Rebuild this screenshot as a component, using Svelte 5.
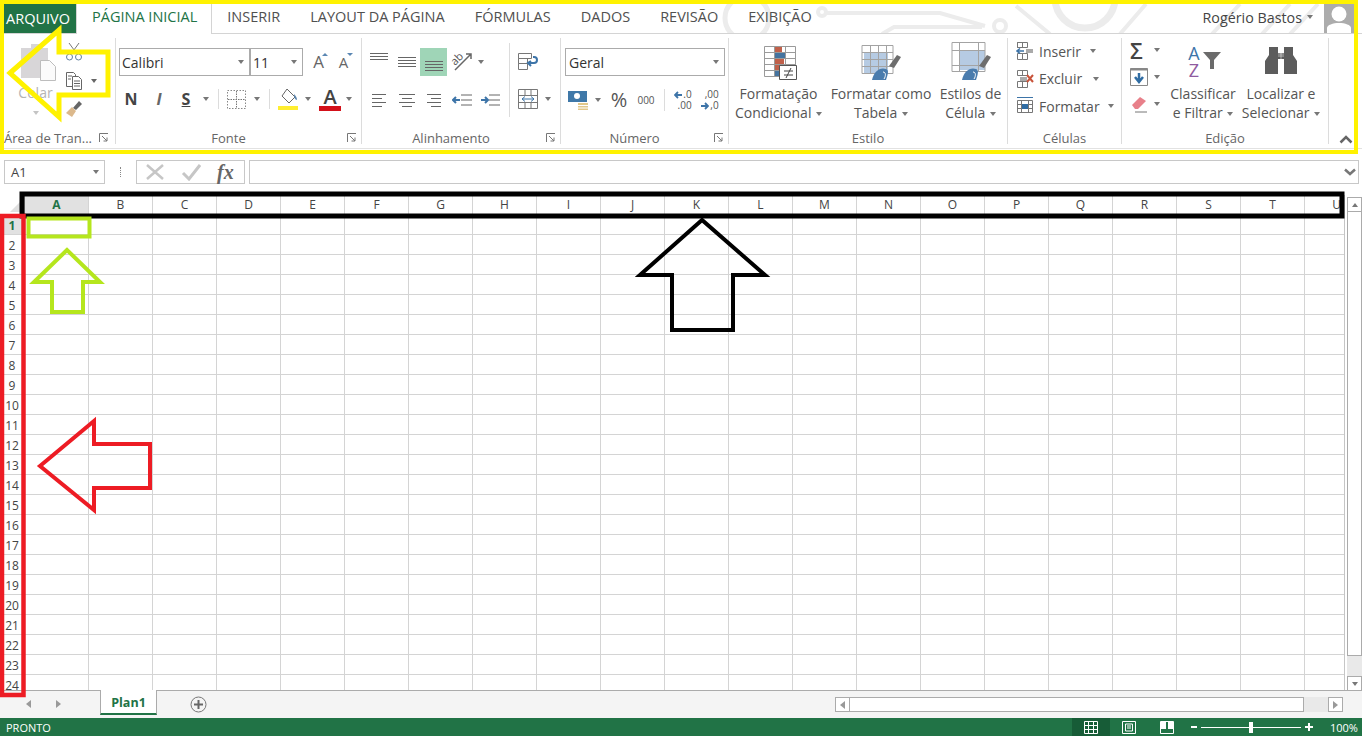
<script>
  const tabs = ['INSERIR', 'LAYOUT DA PÁGINA', 'FÓRMULAS', 'DADOS', 'REVISÃO', 'EXIBIÇÃO'];
  const cols = 'ABCDEFGHIJKLMNOPQRSTU'.split('');
  const rows = Array.from({ length: 24 }, (_, i) => i + 1);
</script>

{#snippet launcher()}
  <svg class="launch" width="10" height="10" viewBox="0 0 10 10"><path d="M.5 9V.5H9M3 3l5 5M8 4.5V8H4.5" fill="none" stroke="#777"/></svg>
{/snippet}

{#snippet vlines(y, n, w = 18)}
  <svg width="20" height="20" viewBox="0 0 20 20">
    {#each Array(n) as _, k}<path d="M1 {y + k * 3 + .5}h{w}" stroke="#666" fill="none"/>{/each}
  </svg>
{/snippet}

{#snippet halign(d)}
  <svg width="20" height="20" viewBox="0 0 20 20"><path d={d} stroke="#666" fill="none"/></svg>
{/snippet}

{#snippet gridbig(kind)}
  <svg class="bigicon" width="40" height="38" viewBox="0 0 40 38">
    {#if kind === 'cond'}
      <path d="M5 0h32v30H5z" fill="#fff"/>
      <path d="M15 0h8v6h-8zM15 12h10v6H15z" fill="#c0604a"/>
      <path d="M15 6h11v6H15zM15 24h6v6h-6z" fill="#44739f"/>
      <path d="M15 18h6v6h-6z" fill="#c0604a"/>
      <path d="M5.500.5h31v30h-31zM15.500 0v30M26.500 0v30M5 6.500h32M5 12.500h32M5 18.500h32M5 24.500h32" fill="none" stroke="#9a9a9a"/>
      <path d="M20.500 19.500h17v14h-17z" fill="#fff" stroke="#555"/>
      <path d="M25 25h9M25 29h9M27 32l5-10" stroke="#444" fill="none"/>
    {:else if kind === 'table'}
      <path d="M3 6h24v22H3z" fill="#b6cbe3"/>
      <path d="M1 -.5h31v28H1zM1 6.500h31M1 13.500h31M1 20.500h31M9.500 -1v28M17.500 -1v28M25.500 -1v28" fill="none" stroke="#a3a3a3"/>
      <path d="M28 20l8-11 4 2-7 11z" fill="#6d6d6d"/>
      <path d="M11 34c2-9 8-13 14-11 3 1 2 5 0 11z" fill="#4a7cad"/>
      <path d="M22 26c3 0 3 4 1 7" stroke="#fff" fill="none"/>
    {:else}
      <path d="M8 4h26v20H8z" fill="#b6cbe3"/>
      <path d="M1 -3.500h33v29H1zM1 4.500h33M1 19.500h33M8.500 -4v29M27.500 -4v29" fill="none" stroke="#a3a3a3"/>
      <path d="M28 20l8-11 4 2-7 11z" fill="#6d6d6d"/>
      <path d="M11 34c2-9 8-13 14-11 3 1 2 5 0 11z" fill="#4a7cad"/>
      <path d="M22 26c3 0 3 4 1 7" stroke="#fff" fill="none"/>
    {/if}
  </svg>
{/snippet}

<div class="app">
  <header class="tabs">
    <svg class="circuit" width="1362" height="33" viewBox="0 0 1362 33">
      <g fill="none" stroke="#ececec" stroke-width="4">
        <circle cx="822" cy="12" r="4"/>
        <path d="M826 13H940L985 26M882 34l12-7h88M1016 6l34 28"/>
        <circle cx="1000" cy="26" r="6"/>
        <circle cx="1085" cy="-2" r="30" stroke-width="7"/>
        <path d="M1120 34l26-30M1212 34l28-30M1262 34l28-30M1290 34l28-30"/>
        <circle cx="747" cy="18" r="22" stroke-width="5"/>
      </g>
    </svg>
    <div class="file">ARQUIVO</div>
    <div class="tab active">PÁGINA INICIAL</div>
    {#each tabs as t}<div class="tab">{t}</div>{/each}
    <div class="user">
      <span>Rogério Bastos</span><i class="caret"></i>
      <svg class="avatar" width="30" height="29" viewBox="0 0 30 29"><path d="M0 0h30v29H0z" fill="#acacac"/><circle cx="15" cy="10" r="7.500" fill="#fff"/><path d="M3 29v-5c0-3 6-5 12-5s12 2 12 5v5z" fill="#fff"/></svg>
    </div>
  </header>

  <section class="ribbon">
    <div class="group g1">
      <div class="body clip">
        <div class="paste">
          <svg class="pasteicon" width="38" height="40" viewBox="0 0 38 40"><path d="M3 6h10V2h8v4h9v30H3z" fill="#d8d6d8"/><path d="M22.500 18.500h9l6 6v14h-15z" fill="#fbfbfb" stroke="#bdbdbd"/></svg>
          <span class="muted">Colar</span>
          <i class="caret pale"></i>
        </div>
        <div class="clipcol">
          <svg width="18" height="20" viewBox="0 0 18 20"><path d="M4 1l8 11M14 1L6 12" stroke="#777" fill="none"/><circle cx="4.500" cy="15" r="3" fill="none" stroke="#5f7f9f"/><circle cx="13.500" cy="15" r="3" fill="none" stroke="#5f7f9f"/></svg>
          <div class="inline">
            <svg width="18" height="20" viewBox="0 0 18 20"><path d="M1.500 1.500h7l2 2v12h-9z" fill="#fff" stroke="#666"/><path d="M7.500 5.500h6l3 3v10h-9z" fill="#fff" stroke="#666"/><path d="M3 5h4M3 8h3M9 10h6M9 12.500h6M9 15h6" stroke="#666"/></svg>
            <i class="caret dark"></i>
          </div>
          <svg width="18" height="18" viewBox="0 0 18 18"><path d="M8 8l6-7 3 3-6 6z" fill="#666"/><path d="M1 13l6-6 4 4-4 6z" fill="#dcb98c"/></svg>
        </div>
      </div>
      <div class="foot left"><span>Área de Tran...</span>{@render launcher()}</div>
    </div>

    <div class="group g2">
      <div class="body stack">
        <div class="font-row">
          <div class="select font-name"><span>Calibri</span><i class="caret"></i></div>
          <div class="select font-size"><span>11</span><i class="caret"></i></div>
          <span class="grow">A<i class="tick up"></i></span>
          <span class="grow small">A<i class="tick down"></i></span>
        </div>
        <div class="track t-font">
          <b class="ic">N</b>
          <em class="ic slant">I</em>
          <b class="ic under">S</b>
          <i class="caret"></i>
          <i class="sep"></i>
          <svg width="19" height="19" viewBox="0 0 19 19"><path d="M.5.500h18v18H.5z" fill="none" stroke="#888" stroke-dasharray="1.500 1.500"/><path d="M9.500 1v17M1 9.500h17" stroke="#777" stroke-dasharray="1.500 1"/></svg>
          <i class="caret"></i>
          <i class="sep"></i>
          <svg width="22" height="24" viewBox="0 0 22 24"><path d="M10 2l8 8-6 6-7-7z" fill="#fff" stroke="#666"/><path d="M17 7c2 2 3 4 3 6-2 0-3-3-3-6z" fill="#5a86b0"/><path d="M1 19h20v4H1z" fill="#ffee30"/></svg>
          <i class="caret"></i>
          <span class="fontcolor">A<i></i></span>
          <i class="caret"></i>
        </div>
      </div>
      <div class="foot"><span></span><span>Fonte</span><span></span>{@render launcher()}</div>
    </div>

    <div class="group g3">
      <div class="body split">
        <div class="stack">
          <div class="track t-al1">
            {@render vlines(1, 3)}
            {@render vlines(5, 4)}
            <div class="sel">{@render vlines(9, 4)}</div>
            <svg width="22" height="22" viewBox="0 0 22 22"><path d="M4 19L20 3M15 3h5v5" fill="none" stroke="#666" stroke-width="1.500"/><text x="1" y="12" font-size="11" transform="rotate(-45 6 10)" fill="#555" font-family="Open Sans">ab</text></svg>
            <i class="caret"></i>
          </div>
          <div class="track t-al2">
            {@render halign('M3 4.500h14M3 8.500h10M3 12.500h14M3 16.500h10')}
            {@render halign('M2 4.500h16M5 8.500h10M2 12.500h16M5 16.500h10')}
            {@render halign('M3 4.500h14M7 8.500h10M3 12.500h14M7 16.500h10')}
            <svg width="20" height="16" viewBox="0 0 20 16"><path d="M9 3h11M9 8h11M9 13h11" stroke="#666"/><path d="M1 8h7M4 5L1 8l3 3" fill="none" stroke="#3d74a8" stroke-width="2"/></svg>
            <svg width="20" height="16" viewBox="0 0 20 16"><path d="M9 3h11M9 8h11M9 13h11" stroke="#666"/><path d="M1 8h7M5 5l3 3-3 3" fill="none" stroke="#3d74a8" stroke-width="2"/></svg>
          </div>
        </div>
        <i class="vsep"></i>
        <div class="wrapcol">
          <svg width="21" height="19" viewBox="0 0 21 19"><path d="M.5 1.500h13v5H.5zM.5 6.500h9v5H.5zM.5 11.500h9v6H.5z" fill="#fff" stroke="#777"/><path d="M10 11h6c4 0 4-6 0-6h-1M13 9l-3 2 3 3" fill="none" stroke="#3d74a8" stroke-width="2"/></svg>
          <div class="inline merge">
            <svg width="20" height="20" viewBox="0 0 20 20"><path d="M.5.500h19v19H.5zM.5 6.500h19M.5 13.500h19M7 .5v6M13 .5v6M7 13.500v6M13 13.500v6" fill="#fff" stroke="#777"/><path d="M4 10h12M7 7.500L4 10l3 2.500M13 7.500l3 2.500-3 2.500" fill="none" stroke="#3d74a8"/></svg>
            <i class="caret"></i>
          </div>
        </div>
      </div>
      <div class="foot"><span></span><span>Alinhamento</span><span></span>{@render launcher()}</div>
    </div>

    <div class="group g4">
      <div class="body stack">
        <div class="select general"><span>Geral</span><i class="caret"></i></div>
        <div class="track t-num">
          <svg width="21" height="21" viewBox="0 0 21 21"><path d="M0 1h19v11H0z" fill="#3f78a8"/><circle cx="9" cy="6" r="3" fill="#fff"/><path d="M10 13h10v7H10z" fill="#e2c88a"/><path d="M10 15.500h10M10 18h10" stroke="#fff"/></svg>
          <i class="caret"></i>
          <span class="pct">%</span>
          <span class="thou">000</span>
          <i class="sep"></i>
          <span class="dec"><span class="decrow"><svg width="8" height="8" viewBox="0 0 8 8"><path d="M8 4H1M4 1L1 4l3 3" fill="none" stroke="#3d74a8" stroke-width="1.800"/></svg>.0</span><span>.00</span></span>
          <span class="dec"><span>,00</span><span class="decrow"><svg width="8" height="8" viewBox="0 0 8 8"><path d="M0 4h7M4 1l3 3-3 3" fill="none" stroke="#3d74a8" stroke-width="1.800"/></svg>,0</span></span>
        </div>
      </div>
      <div class="foot"><span></span><span>Número</span><span></span>{@render launcher()}</div>
    </div>

    <div class="group g5">
      <div class="body bigs">
        <div class="big b1">{@render gridbig('cond')}<span>Formatação</span><span>Condicional <i class="caret"></i></span></div>
        <div class="big b2">{@render gridbig('table')}<span>Formatar como</span><span>Tabela <i class="caret"></i></span></div>
        <div class="big b3">{@render gridbig('style')}<span>Estilos de</span><span>Célula <i class="caret"></i></span></div>
      </div>
      <div class="foot single"><span>Estilo</span></div>
    </div>

    <div class="group g6">
      <div class="body cells">
        <div class="cellrow">
          <svg width="18" height="20" viewBox="0 0 18 20"><path d="M1.500 1.500h5v5h-5zM1.500 12.500h5v6h-5zM6.500 12.500h5v6h-5zM1.500 1.500h10v5h-10z" fill="#fff" stroke="#777"/><path d="M10 8h7v4h-7z" fill="#aaa"/><path d="M1 10h7M4 7.500L1 10l3 2.500" fill="none" stroke="#3d74a8" stroke-width="1.500"/></svg>
          <span>Inserir</span><i class="caret c1"></i>
        </div>
        <div class="cellrow">
          <svg width="18" height="20" viewBox="0 0 18 20"><path d="M1.500 1.500h10v5h-10zM1.500 12.500h10v6h-10zM6.500 12.500v6M6.500 1.500v5" fill="#fff" stroke="#777"/><path d="M4 8h7v4H4z" fill="#aaa"/><path d="M11 6l6 7M17 6l-6 7" stroke="#c8533a" stroke-width="2"/></svg>
          <span>Excluir</span><i class="caret c2"></i>
        </div>
        <div class="cellrow">
          <svg width="18" height="20" viewBox="0 0 18 20"><path d="M1.500 4.500h15v12h-15zM1.500 8.500h15M1.500 12.500h15M5.500 4.500v12M12.500 4.500v12" fill="#fff" stroke="#777"/><path d="M6 8h6v5H6z" fill="#2f6ca3"/><path d="M1 1.500h16" stroke="#3d74a8"/></svg>
          <span>Formatar</span><i class="caret c3"></i>
        </div>
      </div>
      <div class="foot single"><span>Células</span></div>
    </div>

    <div class="group g7">
      <div class="body edit">
        <div class="editcol">
          <div class="inline"><span class="sigma">Σ</span><i class="caret"></i></div>
          <div class="inline">
            <svg width="18" height="18" viewBox="0 0 18 18"><path d="M.5.500h17v17H.5z" fill="#fff" stroke="#888"/><path d="M.5.500h17v2H.5z" fill="#888"/><path d="M9 5v8M5 9l4 5 4-5" fill="none" stroke="#2f6ca3" stroke-width="2.500"/></svg>
            <i class="caret"></i>
          </div>
          <div class="inline">
            <svg width="18" height="18" viewBox="0 0 18 18"><path d="M2 10l8-8 6 4-8 8H5z" fill="#e8808a"/><path d="M5 17h12" stroke="#777"/></svg>
            <i class="caret"></i>
          </div>
        </div>
        <div class="big b4">
          <div class="sorticon"><span class="az"><span class="a">A</span><span class="z">Z</span></span><svg width="18" height="17" viewBox="0 0 18 17"><path d="M0 0h18l-7 8v9H7V8z" fill="#6b6b6b"/></svg></div>
          <span>Classificar</span><span>e Filtrar <i class="caret"></i></span>
        </div>
        <div class="big b5">
          <svg width="36" height="32" viewBox="0 0 36 32"><path d="M6 2h9v6h6V2h9v8l4 6v13H21V14h-6v15H2V16l4-6z" fill="#5c5c5c"/><path d="M15 8h6v4h-6z" fill="#888"/><path d="M18 0v32" stroke="#fff" stroke-width=".5"/></svg>
          <span>Localizar e</span><span>Selecionar <i class="caret"></i></span>
        </div>
      </div>
      <div class="foot single"><span>Edição</span></div>
    </div>

    <div class="collapse">
      <svg width="14" height="9" viewBox="0 0 14 9"><path d="M1.500 7.500L7 2l5.500 5.500" fill="none" stroke="#666" stroke-width="2.500"/></svg>
    </div>
  </section>

  <div class="formula">
    <div class="namebox"><span>A1</span><i class="caret"></i></div>
    <span class="dots"></span>
    <div class="fxbox">
      <svg width="20" height="18" viewBox="0 0 20 18"><path d="M2 2l16 14M18 2L2 16" stroke="#c6c6c6" stroke-width="2.500"/></svg>
      <svg width="20" height="18" viewBox="0 0 20 18"><path d="M2 10l6 6L19 2" fill="none" stroke="#c6c6c6" stroke-width="3"/></svg>
      <span class="fx">fx</span>
    </div>
    <div class="finput"></div>
    <div class="fdown"><svg width="12" height="8" viewBox="0 0 12 8"><path d="M1 1.500l5 4.500 5-4.500" fill="none" stroke="#777" stroke-width="2.500"/></svg></div>
  </div>

  <div class="sheet">
    <div class="gridwrap">
      <div class="grid">
        <div class="corner"><i></i></div>
        {#each cols as c, i}<div class="ch" class:on={i === 0}>{c}</div>{/each}
        {#each rows as r}
          <div class="rh" class:on={r === 1}>{r}</div>
          {#each cols as c}<div class="cell"></div>{/each}
        {/each}
      </div>
    </div>
    <div class="vscroll">
      <div class="sbtn"><i class="tri-up"></i></div>
      <div class="thumb"></div>
      <div class="rest"></div>
      <div class="sbtn"><i class="caret"></i></div>
    </div>
  </div>

  <div class="tabbar">
    <div class="navs"><i class="nl"></i><i class="nr"></i></div>
    <div class="sheettab">Plan1</div>
    <svg class="plus" width="17" height="17" viewBox="0 0 17 17"><circle cx="8.500" cy="8.500" r="7.500" fill="none" stroke="#777"/><path d="M8.500 4v9M4 8.500h9" stroke="#666" stroke-width="2"/></svg>
    <div class="hscroll">
      <div class="hbtn"><i class="nl"></i></div>
      <div class="hthumb"></div>
      <div class="hrest"></div>
      <div class="hbtn"><i class="nr"></i></div>
    </div>
  </div>

  <footer class="status">
    <span>PRONTO</span>
    <div class="views">
      <div class="view on"><svg width="14" height="13" viewBox="0 0 14 13"><path d="M.5.500h13v12H.5zM.5 4.500h13M.5 8.500h13M4.500.5v12M9.500.5v12" fill="none" stroke="#fff"/></svg></div>
      <div class="view"><svg width="14" height="13" viewBox="0 0 14 13"><path d="M.5.500h13v12H.5z" fill="none" stroke="#fff"/><path d="M3.500 3h7v7h-7zM5 5h4M5 7h4" fill="none" stroke="#fff"/></svg></div>
      <div class="view"><svg width="14" height="13" viewBox="0 0 14 13"><path d="M.5.500h13v12H.5z" fill="none" stroke="#fff"/><path d="M1 1h5v7H1zM8 1h5v7H8z" fill="#fff"/></svg></div>
    </div>
    <div class="zoom">
      <i class="zm"></i>
      <div class="slider"><i class="knob"></i></div>
      <i class="zp"></i>
    </div>
    <span class="pctz">100%</span>
  </footer>

  <svg class="marks" width="1362" height="736" viewBox="0 0 1362 736">
    <g fill="none" stroke-linejoin="miter">
      <rect x="2" y="2" width="1354" height="150" stroke="#fff200" stroke-width="4"/>
      <path d="M10 73L59 30V52H108V95H59V117Z" stroke="#fff200" stroke-width="5"/>
      <rect x="22" y="194" width="1320" height="22" stroke="#000" stroke-width="5"/>
      <path d="M702 220L640 275H672V330H733V275H765Z" stroke="#000" stroke-width="4"/>
      <rect x="28.500" y="218.500" width="61" height="18" stroke="#b5e61d" stroke-width="4"/>
      <path d="M67 250L34 282H52V312H83V282H100Z" stroke="#b5e61d" stroke-width="4"/>
      <rect x="2" y="216" width="21.500" height="479" stroke="#ed1c24" stroke-width="4.500"/>
      <path d="M40 466L94 421V444H150V488H94V510Z" stroke="#ed1c24" stroke-width="4"/>
    </g>
  </svg>
</div>

<style>
  :global(body) { margin: 0; background: #fff; }
  .app {
    position: relative; width: 1362px; height: 736px; overflow: hidden; background: #fff;
    display: flex; flex-direction: column;
    font-family: "Open Sans", "Noto Sans", sans-serif; color: #444; font-size: 13px;
  }
  i { font-style: normal; }
  .caret { display: inline-block; width: 0; height: 0; border: 3.5px solid transparent; border-top: 4px solid #777; border-bottom: 0; flex: none; }
  .caret.pale { border-top-color: #c4c4c4; }
  .caret.dark { border-top-color: #666; }
  .inline { display: flex; align-items: center; }

  .tabs { position: relative; height: 33px; display: flex; align-items: stretch; border-bottom: 1px solid #d4d4d4; font-size: 14.5px; flex: none; }
  .circuit { position: absolute; left: 0; top: 0; }
  .file { position: relative; width: 76px; margin-top: 4px; background: #217346; color: #fff; display: flex; align-items: center; justify-content: center; padding-bottom: 1px; box-sizing: border-box; }
  .tab { position: relative; padding: 0 15px; display: flex; align-items: center; color: #505050; }
  .tab.active { color: #217346; background: #fff; border: 1px solid #d4d4d4; border-bottom: 0; border-top: 0; height: 34px; box-sizing: border-box; padding: 0 14px 1px 15px; margin-bottom: -1px; }
  .user { position: relative; margin-left: auto; padding: 4px 8px 0 0; display: flex; align-items: center; gap: 5px; color: #444; font-size: 14.3px; }
  .user span { margin-top: -2px; }
  .user .caret { margin-top: -3px; }
  .avatar { margin-left: 6px; }

  .ribbon { position: relative; height: 106px; padding: 4px 0; display: flex; border-bottom: 1px solid #e2e2e2; flex: none; }
  .group { display: flex; flex-direction: column; border-right: 1px solid #dcdcdc; box-sizing: border-box; flex: none; }
  .body { flex: 1; min-height: 0; }
  .foot { height: 12px; line-height: 12px; display: grid; grid-template-columns: 1fr auto 1fr 20px; align-items: center; color: #666; font-size: 13px; padding: 0 4px; white-space: nowrap; }
  .foot.left { grid-template-columns: auto 1fr; padding: 0 6px 0 4px; }
  .foot.single { grid-template-columns: 1fr; justify-items: center; }
  .launch { justify-self: end; }

  .g1 { width: 116px; }
  .clip { display: flex; padding: 4px 0 0 18px; }
  .paste { width: 35px; display: flex; flex-direction: column; align-items: center; }
  .pasteicon { align-self: flex-start; }
  .muted { color: #b4b4b4; font-size: 14px; margin-top: 2px; line-height: 18px; }
  .paste .caret { margin-top: 9px; }
  .clipcol { margin-left: 12px; display: flex; flex-direction: column; gap: 9px; }
  .clipcol .inline { gap: 8px; }

  .g2 { width: 246px; }
  .stack { display: flex; flex-direction: column; }
  .g2 .stack { padding: 10px 0 0 3px; }
  .font-row { display: flex; align-items: center; height: 28px; }
  .select { height: 28px; box-sizing: border-box; border: 1px solid #ababab; background: #fff; display: flex; align-items: center; justify-content: space-between; padding: 0 5px 0 2px; font-size: 14px; color: #333; }
  .font-name { width: 131px; }
  .font-size { width: 53px; }
  .grow { position: relative; font-size: 17px; margin-left: 8px; width: 15px; color: #666; text-align: center; line-height: 24px; }
  .grow.small { font-size: 15px; margin-left: 10px; }
  .tick { position: absolute; right: -2px; top: 3px; border: 3px solid transparent; }
  .tick.up { border-bottom: 3px solid #5b87b3; border-top: 0; }
  .tick.down { border-top: 3px solid #5b87b3; border-bottom: 0; }
  .track { display: grid; align-items: center; justify-items: center; height: 22px; margin-top: 13px; }
  .t-font { margin-left: 2px; margin-top: 11px; grid-template-columns: 20px 36px 18px 22px 2px 34px 8px 17px 20px 20px 24px 14px; }
  .track .sep { width: 1px; height: 20px; background: #dcdcdc; display: block; }
  .ic { font-size: 16px; color: #444; }
  .slant { font-weight: 700; color: #666; }
  .under { text-decoration: underline; }
  .fontcolor { display: flex; flex-direction: column; align-items: center; font-size: 20px; line-height: 18px; color: #444; font-weight: 600; }
  .fontcolor i { display: block; width: 22px; height: 5px; background: #d3111a; }

  .g3 { width: 199px; }
  .split { display: flex; }
  .g3 .stack { padding: 10px 0 0 2px; width: 144px; flex: none; }
  .t-al1 { height: 28px; margin-top: 0; grid-template-columns: 30px 26px 27px 29px 10px; }
  .sel { width: 27px; height: 28px; background: #9fd5b7; display: flex; align-items: center; justify-content: center; }
  .t-al2 { grid-template-columns: 30px 26px 27px 29px 28px; }
  .vsep { width: 1px; height: 74px; margin: 5px 0 0 1px; background: #dcdcdc; flex: none; }
  .wrapcol { padding: 14px 0 0 8px; display: flex; flex-direction: column; gap: 18px; }
  .merge { gap: 7px; }

  .g4 { width: 168px; }
  .g4 .stack { padding: 10px 0 0 4px; }
  .general { width: 160px; padding-left: 3px; }
  .t-num { margin-left: 2px; grid-template-columns: 22px 18px 24px 30px 6px 32px 22px; }
  .t-num .sep { height: 22px; }
  .pct { font-size: 20px; color: #555; line-height: 22px; }
  .thou { font-size: 10px; color: #555; }
  .dec { display: flex; flex-direction: column; font-size: 10px; line-height: 11px; align-items: flex-end; color: #555; }
  .decrow { display: flex; align-items: center; gap: 1px; }

  .g5 { width: 279px; }
  .bigs { display: flex; padding-top: 8px; }
  .big { display: flex; flex-direction: column; align-items: center; font-size: 14px; line-height: 19px; color: #555; flex: none; white-space: nowrap; }
  .bigicon { overflow: visible; }
  .big .caret { vertical-align: middle; margin-left: 1px; }
  .b1 { width: 99px; }
  .b2 { width: 106px; }
  .b3 { width: 73px; }

  .g6 { width: 114px; }
  .cells { padding: 3px 0 0 8px; display: flex; flex-direction: column; gap: 7.5px; }
  .cellrow { display: flex; align-items: center; height: 20px; gap: 5px; font-size: 14px; color: #555; }
  .c1 { margin-left: 4px; }
  .c2 { margin-left: 6px; }
  .c3 { margin-left: 3px; }

  .g7 { width: 207px; }
  .edit { display: flex; }
  .editcol { width: 46px; flex: none; padding: 2px 0 0 8px; box-sizing: border-box; display: flex; flex-direction: column; gap: 7px; }
  .editcol .inline { height: 20px; gap: 6px; }
  .sigma { width: 18px; font-size: 22px; line-height: 20px; font-weight: 600; color: #444; }
  .b4 { width: 70px; padding-top: 7px; }
  .b5 { width: 86px; padding-top: 7px; }
  .b5 svg { margin-bottom: 7px; }
  .sorticon { display: flex; align-items: flex-start; height: 34px; margin-bottom: 5px; }
  .sorticon svg { margin-top: 7px; }
  .az { display: flex; flex-direction: column; font-size: 18px; line-height: 17px; width: 17px; align-items: center; }
  .a { color: #3d74a8; }
  .z { color: #8f5ba0; }
  .collapse { flex: 1; display: flex; align-items: flex-end; justify-content: flex-end; padding: 0 9px 0 0; }

  .formula { display: flex; align-items: stretch; height: 24px; margin-top: 11px; padding-left: 4px; flex: none; }
  .namebox { width: 101px; box-sizing: border-box; border: 1px solid #c8c8c8; display: flex; align-items: center; justify-content: space-between; padding: 0 5px 0 6px; font-size: 13px; color: #444; }
  .dots { width: 1px; height: 10px; margin: 7px 14px 0 15px; border-left: 1px dotted #888; }
  .fxbox { width: 109px; box-sizing: border-box; border: 1px solid #c8c8c8; display: flex; align-items: center; gap: 16px; padding-left: 8px; }
  .fx { font-family: "Liberation Serif", serif; font-style: italic; font-weight: 700; font-size: 20px; color: #666; line-height: 20px; }
  .finput { flex: 1; margin-left: 4px; border: 1px solid #c8c8c8; border-right: 0; }
  .fdown { width: 17px; margin-right: 3px; border: 1px solid #c8c8c8; border-left: 0; display: flex; align-items: center; justify-content: center; }

  .sheet { display: flex; height: 495px; margin-top: 11px; flex: none; }
  .gridwrap { width: 1344px; height: 495px; overflow: hidden; border-right: 1px solid #c6c6c6; flex: none; }
  .grid { display: grid; grid-template-columns: 25px repeat(21, 64px); grid-auto-rows: 20px; width: 1369px; }
  .corner { position: relative; border-bottom: 1px solid #ababab; border-right: 1px solid #ababab; box-sizing: border-box; }
  .corner i { position: absolute; right: 2px; bottom: 2px; width: 0; height: 0; border-left: 12px solid transparent; border-bottom: 12px solid #dfdfdf; }
  .ch { box-sizing: border-box; border-right: 1px solid #d4d4d4; border-bottom: 1px solid #ababab; display: flex; align-items: center; justify-content: center; font-size: 12px; color: #444; }
  .ch.on, .rh.on { background: #e1e1e1; color: #217346; font-weight: 700; }
  .rh { box-sizing: border-box; border-right: 1px solid #ababab; border-bottom: 1px solid #d4d4d4; display: flex; align-items: center; justify-content: center; padding-top: 2px; font-size: 12px; color: #444; }
  .cell { box-sizing: border-box; border-right: 1px solid #d4d4d4; border-bottom: 1px solid #d4d4d4; }
  .vscroll { width: 15px; margin: 2px 0 0 2px; display: flex; flex-direction: column; height: 494px; background: #e9e9e9; flex: none; }
  .sbtn { height: 15px; box-sizing: border-box; border: 1px solid #ababab; background: #fff; display: flex; align-items: center; justify-content: center; flex: none; }
  .tri-up { width: 0; height: 0; border: 3.5px solid transparent; border-bottom: 4px solid #777; border-top: 0; }
  .thumb { height: 444px; box-sizing: border-box; background: #fff; border: 1px solid #ababab; border-top: 0; flex: none; }
  .rest { flex: 1; }

  .tabbar { height: 28px; box-sizing: border-box; background: #f4f4f4; border-top: 1px solid #ababab; display: flex; position: relative; flex: none; }
  .navs { width: 100px; padding: 9px 0 0 26px; box-sizing: border-box; display: flex; gap: 25px; }
  .nl, .nr { display: block; width: 0; height: 0; border: 4px solid transparent; }
  .nl { border-right: 5px solid #999; border-left: 0; }
  .nr { border-left: 5px solid #999; border-right: 0; }
  .sheettab { width: 57px; height: 25px; box-sizing: border-box; margin-top: -1px; padding-top: 1px; background: #fff; border: 1px solid #ababab; border-top: 0; border-bottom: 2px solid #217346; color: #217346; font-weight: 700; font-size: 12.500px; display: flex; align-items: center; justify-content: center; }
  .plus { margin: 5px 0 0 33px; }
  .hscroll { margin: 6px 19px 0 auto; width: 508px; height: 15px; display: flex; background: #e9e9e9; }
  .hbtn { width: 15px; box-sizing: border-box; border: 1px solid #ababab; background: #fff; display: flex; align-items: center; justify-content: center; flex: none; }
  .hthumb { width: 454px; box-sizing: border-box; border: 1px solid #ababab; border-left: 0; background: #fff; flex: none; }
  .hrest { flex: 1; }

  .status { height: 18px; background: #217346; color: #fff; display: flex; align-items: center; padding-left: 6px; font-size: 11px; flex: none; }
  .views { display: flex; margin-left: auto; height: 18px; }
  .view { width: 38px; display: flex; align-items: center; justify-content: center; }
  .view.on { background: #175c37; }
  .zoom { display: flex; align-items: center; margin-left: 5px; gap: 4px; }
  .zm { display: block; width: 6px; height: 2px; background: #fff; }
  .slider { position: relative; width: 100px; height: 1px; background: #fff; }
  .knob { position: absolute; left: 48px; top: -5px; width: 4px; height: 11px; background: #fff; }
  .zp { display: block; position: relative; width: 8px; height: 2px; background: #fff; }
  .zp::after { content: ""; position: absolute; left: 3px; top: -3px; width: 2px; height: 8px; background: #fff; }
  .pctz { margin-left: 17px; width: 32px; }

  .marks { position: absolute; left: 0; top: 0; pointer-events: none; }
</style>
